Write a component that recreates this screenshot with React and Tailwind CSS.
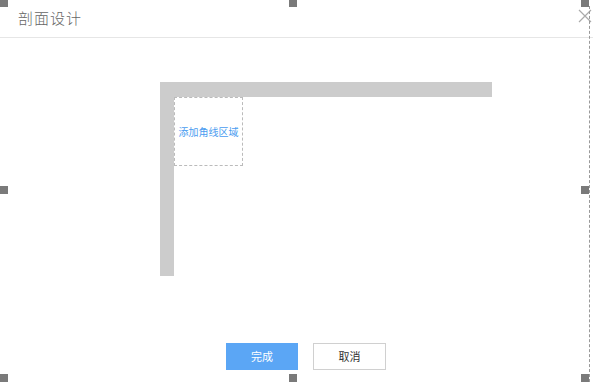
const Handle = ({ className }) => (
  <div className={`absolute w-[8px] h-[8px] bg-[#7a7a7a] ${className}`}></div>
);

const App = () => {
  return (
    <div
      className="relative w-[593px] h-[382px] bg-white overflow-hidden"
      style={{ fontFamily: '"Noto Sans CJK SC", "Noto Sans", sans-serif' }}
    >
      {/* header */}
      <div className="h-[38px] border-b border-[#e6e6e6] flex items-center pl-[18px]">
        <span className="text-[15px] text-[#666] font-light tracking-[1px]">剖面设计</span>
      </div>

      {/* corner profile */}
      <div className="pt-[44px] pl-[160px]">
        <div className="w-[332px] h-[15px] bg-[#cccccc]"></div>
        <div className="flex">
          <div className="w-[14px] h-[179px] bg-[#cccccc]"></div>
          <div className="w-[69px] h-[69px] border border-dashed border-[#bbbbbb] flex items-center justify-center">
            <span className="text-[10px] text-[#4a9cf0]">添加角线区域</span>
          </div>
        </div>
      </div>

      {/* footer buttons */}
      <div className="flex gap-[15px] pl-[226px] pt-[67px]">
        <button className="w-[72px] h-[27px] bg-[#5ba6f5] text-white text-[11px]">
          完成
        </button>
        <button className="w-[73px] h-[27px] bg-white border border-[#d0d0d0] text-[#333] text-[11px]">
          取消
        </button>
      </div>

      {/* close */}
      <svg
        className="absolute left-[578px] top-[9px]"
        width="14"
        height="14"
        viewBox="0 0 14 14"
      >
        <path d="M1 1 L13 13 M13 1 L1 13" stroke="#aaa" strokeWidth="1.2" />
      </svg>

      {/* selection frame */}
      <div className="absolute left-[589px] top-[6px] bottom-0 border-l border-dashed border-[#999]"></div>
      <Handle className="left-0 top-[-1px]" />
      <Handle className="left-[289px] top-[-1px]" />
      <Handle className="left-[581px] top-[-1px]" />
      <Handle className="left-0 top-[186px]" />
      <Handle className="left-[581px] top-[186px]" />
      <Handle className="left-0 top-[374px]" />
      <Handle className="left-[289px] top-[374px]" />
      <Handle className="left-[581px] top-[374px]" />
    </div>
  );
};

export default App;
